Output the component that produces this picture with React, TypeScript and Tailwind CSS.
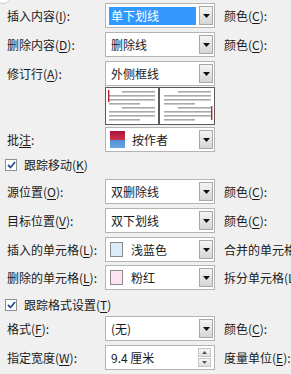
import React from "react";

const FONT = { fontFamily: '"Noto Sans CJK SC", "Noto Sans", sans-serif' };

function U({ children }: { children: React.ReactNode }) {
  return <span className="underline underline-offset-2 decoration-[1px]">{children}</span>;
}

function Arrow() {
  return (
    <div className="w-[14px] h-full shrink-0 flex items-center justify-center border border-[#a8a8a8] bg-gradient-to-b from-[#f4f4f4] to-[#d6d6d6]">
      <svg width="7" height="4" viewBox="0 0 7 4">
        <polygon points="0,0 7,0 3.5,4" fill="#111" />
      </svg>
    </div>
  );
}

function Combo({ children, selected }: { children: React.ReactNode; selected?: boolean }) {
  return (
    <div className="w-[110px] shrink-0 h-full flex bg-white border border-[#b4b4b4] p-[2px] pr-[1px]">
      <div className="flex-1 flex items-center pl-[1px] pr-[3px]">
        {selected ? (
          <div className="h-[18px] w-full bg-[#3399ff] text-white flex items-center pl-[2px]">{children}</div>
        ) : (
          <div className="flex items-center pl-[2px] w-full">{children}</div>
        )}
      </div>
      <Arrow />
    </div>
  );
}

function Spin({ children }: { children: React.ReactNode }) {
  return (
    <div className="w-[110px] shrink-0 h-full flex bg-white border border-[#b4b4b4] p-[2px] pr-[3px]">
      <div className="flex-1 flex items-center pl-[3px]">{children}</div>
      <div className="w-[13px] h-full flex flex-col gap-[1px]">
        <div className="flex-1 border border-[#c4c4c4] bg-gradient-to-b from-[#f6f6f6] to-[#e0e0e0] flex items-center justify-center">
          <svg width="5" height="3" viewBox="0 0 5 3"><polygon points="0,3 5,3 2.5,0" fill="#555" /></svg>
        </div>
        <div className="flex-1 border border-[#c4c4c4] bg-gradient-to-b from-[#f6f6f6] to-[#e0e0e0] flex items-center justify-center">
          <svg width="5" height="3" viewBox="0 0 5 3"><polygon points="0,0 5,0 2.5,3" fill="#555" /></svg>
        </div>
      </div>
    </div>
  );
}

function Row({ label, control, right, cls }: { label: React.ReactNode; control: React.ReactNode; right?: React.ReactNode; cls: string }) {
  return (
    <div className={`flex h-[25px] items-stretch ${cls}`}>
      <div className="w-[105px] shrink-0 pl-[7px] flex items-center whitespace-nowrap">{label}</div>
      {control}
      {right && <div className="pl-[9px] shrink-0 flex items-center whitespace-nowrap">{right}</div>}
    </div>
  );
}

function Check({ label, cls }: { label: React.ReactNode; cls: string }) {
  return (
    <div className={`flex h-[20px] items-center pl-[5px] ${cls}`}>
      <div className="w-[12px] h-[12px] border border-[#8e8f8f] bg-white flex items-center justify-center">
        <svg width="9" height="8" viewBox="0 0 9 8">
          <path d="M1 4 L3.5 6.5 L8 1" stroke="#2a4f9a" strokeWidth="1.8" fill="none" />
        </svg>
      </div>
      <span className="ml-[7px] whitespace-nowrap">{label}</span>
    </div>
  );
}

function Preview() {
  const L = (x1: number, x2: number, y: number) => <rect x={x1} y={y} width={x2 - x1} height={1.6} fill="#a9a9a9" />;
  return (
    <div className="flex h-[38px] mt-[1px]">
      <div className="w-[105px] shrink-0" />
      <svg width="110" height="38" viewBox="0 0 110 38">
        <rect x="0.5" y="0.5" width="109" height="37" fill="#fff" stroke="#5a5a5a" />
        <rect x="53" y="0" width="2" height="38" fill="#5a5a5a" />
        {L(17, 50, 4)}
        {L(4, 50, 8)}
        {L(4, 50, 12)}
        {L(4, 35, 16)}
        {L(17, 50, 20)}
        {L(4, 50, 24)}
        {L(4, 50, 28)}
        {L(4, 35, 32)}
        <rect x="3" y="3" width="1.4" height="12" fill="#b3262f" />
        {L(73, 106, 4)}
        {L(59, 106, 8)}
        {L(59, 106, 12)}
        {L(59, 90, 16)}
        {L(73, 106, 20)}
        {L(59, 106, 24)}
        {L(59, 106, 28)}
        {L(59, 90, 32)}
        <rect x="106" y="19" width="1.4" height="14" fill="#b3262f" />
      </svg>
    </div>
  );
}

export default function App() {
  return (
    <div className="relative w-[291px] h-[374px] overflow-hidden bg-[#f0f0f0] text-[12px] leading-none text-[#1a1a1a]" style={FONT}>
      <div className="absolute left-[-6px] top-[-14px] w-[18px] h-[18px] rounded-full bg-white border border-[#d0d0d0]" />
      <div className="flex flex-col pt-[3px]">
        <Row cls="" label={<span>插入内容(<U>I</U>):</span>} control={<Combo selected>单下划线</Combo>} right={<span>颜色(<U>C</U>):</span>} />
        <Row cls="mt-[4px]" label={<span>删除内容(<U>D</U>):</span>} control={<Combo>删除线</Combo>} right={<span>颜色(<U>C</U>):</span>} />
        <Row cls="mt-[4px]" label={<span>修订行(<U>A</U>):</span>} control={<Combo>外侧框线</Combo>} />
        <Preview />
        <Row
          cls="mt-[2px]"
          label={<span>批<U>注</U>:</span>}
          control={
            <Combo>
              <div className="w-[15px] h-[17px] shrink-0 flex flex-col mr-[7px] -ml-[1px]">
                <div className="flex-1 bg-gradient-to-b from-[#a8123a] to-[#d0304a]" />
                <div className="flex-1 bg-gradient-to-b from-[#4f8fd6] to-[#6aa6e0]" />
              </div>
              按作者
            </Combo>
          }
        />
        <Check cls="mt-[3px]" label={<span>跟踪移动(<U>K</U>)</span>} />
        <Row cls="mt-[4px]" label={<span>源位置(<U>O</U>):</span>} control={<Combo>双删除线</Combo>} right={<span>颜色(<U>C</U>):</span>} />
        <Row cls="mt-[4px]" label={<span>目标位置(<U>V</U>):</span>} control={<Combo>双下划线</Combo>} right={<span>颜色(<U>C</U>):</span>} />
        <Row
          cls="mt-[4px]"
          label={<span>插入的单元格(<U>L</U>):</span>}
          control={
            <Combo>
              <div className="w-[13px] h-[15px] shrink-0 bg-[#dcebf8] border border-[#8a8a8a] mr-[8px] -ml-[1px]" />
              浅蓝色
            </Combo>
          }
          right={<span>合并的单元格(L):</span>}
        />
        <Row
          cls="mt-[3px]"
          label={<span>删除的单元格(<U>L</U>):</span>}
          control={
            <Combo>
              <div className="w-[13px] h-[15px] shrink-0 bg-[#fbe3f1] border border-[#8a8a8a] mr-[8px] -ml-[1px]" />
              粉红
            </Combo>
          }
          right={<span>拆分单元格(L):</span>}
        />
        <Check cls="mt-[5px]" label={<span>跟踪格式设置(<U>T</U>)</span>} />
        <Row cls="mt-[1px]" label={<span>格式(<U>F</U>):</span>} control={<Combo>(无)</Combo>} right={<span>颜色(<U>C</U>):</span>} />
        <Row cls="mt-[4px]" label={<span>指定宽度(<U>W</U>):</span>} control={<Spin>9.4 厘米</Spin>} right={<span>度量单位(<U>E</U>):</span>} />
      </div>
    </div>
  );
}
